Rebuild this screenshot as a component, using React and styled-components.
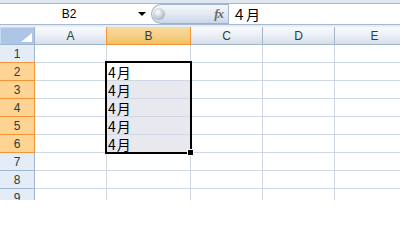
import React from "react";
import styled, { createGlobalStyle, css } from "styled-components";

const GlobalStyle = createGlobalStyle`
    html, body {
        margin: 0;
        padding: 0;
        width: 400px;
        height: 200px;
        overflow: hidden;
        background: #ffffff;
    }
`;

const Window = styled.div`
    width: 400px;
    height: 200px;
    overflow: hidden;
    background: #dfe7f1;
    padding-top: 3px;
    box-sizing: border-box;
    font-family: "Liberation Sans", Arial, sans-serif;
`;

const FormulaRow = styled.div`
    display: flex;
    height: 22px;
    border-top: 1px solid #a5b8d0;
    border-bottom: 1px solid #a5b8d0;
    box-sizing: border-box;
    background: #ffffff;
`;

const NameBox = styled.div`
    display: flex;
    align-items: center;
    width: 151px;
    background: #ffffff;
`;

const NameText = styled.div`
    flex: 1;
    text-align: center;
    font-size: 12px;
    color: #000;
`;

const DropArrow = styled.div`
    width: 0;
    height: 0;
    margin-right: 5px;
    border-left: 4px solid transparent;
    border-right: 4px solid transparent;
    border-top: 4px solid #000;
`;

const Splitter = styled.div`
    display: flex;
    align-items: center;
    justify-content: space-between;
    width: 77px;
    box-sizing: border-box;
    padding: 0 5px 0 1px;
    border-radius: 10px 0 0 10px;
    border: 1px solid #9fb2cc;
    border-right: none;
    background: linear-gradient(#f6f8fc 0%, #e3eaf4 50%, #c9d6e8 100%);
`;

const Knob = styled.div`
    width: 12px;
    height: 12px;
    border-radius: 50%;
    background: radial-gradient(circle at 40% 35%, #ffffff 0%, #c8cdd4 50%, #8f969f 100%);
`;

const FxLabel = styled.span`
    font-family: "Liberation Serif", "Times New Roman", serif;
    font-style: italic;
    font-weight: bold;
    font-size: 13px;
    color: #6a6a6a;
    letter-spacing: -1px;
`;

const FormulaInput = styled.div`
    flex: 1;
    display: flex;
    align-items: center;
    padding-left: 3px;
    border-left: 1px solid #a5b8d0;
    font-family: "Noto Sans CJK JP", sans-serif;
    font-size: 14px;
    color: #000;
`;

const Band = styled.div`
    height: 2px;
    background: #e8edf4;
`;

const Sheet = styled.div`
    display: grid;
    grid-template-columns: 35px 72px 84px 72px 72px 80px;
    grid-auto-rows: 18px;
    background: #ffffff;
`;

const place = css`
    grid-row: ${p => p.$r};
    grid-column: ${p => p.$c};
`;

const headerBase = css`
    ${place};
    display: flex;
    align-items: center;
    justify-content: center;
    box-sizing: border-box;
    font-size: 12px;
    color: #27413e;
    border-right: 1px solid #9eb6ce;
    border-bottom: 1px solid #9eb6ce;
`;

const Corner = styled.div`
    ${headerBase};
    position: relative;
    background: #aec6e6;
    box-shadow: inset 1px 1px 0 #c9dbf1;
`;

const CornerMark = styled.svg`
    position: absolute;
    right: 2px;
    bottom: 2px;
`;

const ColHeader = styled.div`
    ${headerBase};
    position: relative;
    background: linear-gradient(#f9fcfd 0%, #e9eef5 55%, #d6dde9 100%);
    ${p => p.$selected && css`
        z-index: 1;
        background: linear-gradient(#f9d99f 0%, #f6cf84 55%, #f1c15f 100%);
        border-right-color: #f29536;
        border-bottom-color: #f29536;
        box-shadow: -1px 0 0 #f29536;
    `}
`;

const RowHeader = styled.div`
    ${headerBase};
    position: relative;
    background: #e4ecf7;
    ${p => p.$selected && css`
        z-index: 1;
        background: #fdd493;
        border-right-color: #f29536;
        border-bottom-color: #f29536;
        box-shadow: 0 -1px 0 #f29536;
    `}
`;

const Cell = styled.div`
    ${place};
    display: flex;
    align-items: center;
    box-sizing: border-box;
    padding: 1px 0 0 1px;
    overflow: hidden;
    border-right: 1px solid #d0d7e5;
    border-bottom: 1px solid #d0d7e5;
    font-family: "Noto Sans CJK JP", sans-serif;
    font-size: 14px;
    line-height: 16px;
    letter-spacing: 1px;
    color: #000;
    background: ${p => (p.$selected ? "#e8e9ef" : "#ffffff")};
`;

const Selection = styled.div`
    grid-column: 3;
    grid-row: 3 / 8;
    margin: -2px -1px -1px -2px;
    border: 2px solid #000;
    position: relative;
    z-index: 2;
    pointer-events: none;
`;

const FillHandle = styled.div`
    position: absolute;
    right: -4px;
    bottom: -4px;
    width: 5px;
    height: 5px;
    background: #000;
    border: 1px solid #fff;
`;

const COLS = ["A", "B", "C", "D", "E"];
const ROWS = [1, 2, 3, 4, 5, 6, 7, 8, 9];
const DATA = { B2: "4月", B3: "4月", B4: "4月", B5: "4月", B6: "4月" };
const SEL_COL = "B";
const SEL_ROWS = [2, 3, 4, 5, 6];

class App extends React.Component
{
    renderHeader() {
        return COLS.map((col, i) => (
            <ColHeader key={col} $r={1} $c={i + 2} $selected={col === SEL_COL}>{col}</ColHeader>
        ));
    }

    renderRows() {
        return ROWS.map(row => {
            const rowSelected = SEL_ROWS.includes(row);
            return (
                <React.Fragment key={row}>
                    <RowHeader $r={row + 1} $c={1} $selected={rowSelected}>{row}</RowHeader>
                    {COLS.map((col, i) => {
                        const id = col + row;
                        // active cell stays white, the rest of the range is shaded
                        const shaded = col === SEL_COL && rowSelected && row !== 2;
                        return (
                            <Cell key={col} $r={row + 1} $c={i + 2} $selected={shaded}>
                                {DATA[id] || ""}
                            </Cell>
                        );
                    })}
                </React.Fragment>
            );
        });
    }

    render() {
        return (
            <Window>
                <GlobalStyle />
                <FormulaRow>
                    <NameBox>
                        <NameText>B2</NameText>
                        <DropArrow />
                    </NameBox>
                    <Splitter>
                        <Knob />
                        <FxLabel>fx</FxLabel>
                    </Splitter>
                    <FormulaInput>４月</FormulaInput>
                </FormulaRow>
                <Band />
                <Sheet>
                    <Corner $r={1} $c={1}>
                        <CornerMark width="11" height="9" viewBox="0 0 11 9">
                            <polygon points="11,0 11,9 0,9" fill="#ffffff" />
                        </CornerMark>
                    </Corner>
                    {this.renderHeader()}
                    {this.renderRows()}
                    <Selection>
                        <FillHandle />
                    </Selection>
                </Sheet>
            </Window>
        );
    }
}

export default App;
